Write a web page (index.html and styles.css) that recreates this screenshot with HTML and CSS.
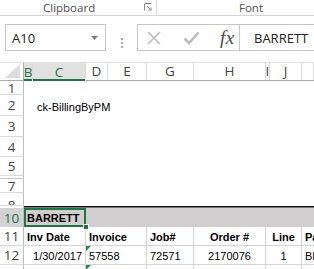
FILE: index.html
```html
<!DOCTYPE html>
<html>
<head>
<meta charset="utf-8">
<link rel="stylesheet" href="styles.css">
</head>
<body>
<div class="app">
  <div class="ribbon">
    <div class="group clip">
      <span class="glabel">Clipboard</span>
      <svg class="launcher" width="8" height="8" viewBox="0 0 8 8"><path d="M0.5 7.5V0.5H7.5" fill="none" stroke="#8a8a8a"/><path d="M3 3L7 7M7 4.5V7H4.5" fill="none" stroke="#8a8a8a"/></svg>
    </div>
    <div class="group fontgrp"><span class="glabel">Font</span></div>
  </div>

  <div class="fbar">
    <div class="namebox">
      <span class="nbtext">A10</span>
      <svg class="caret" width="7" height="4" viewBox="0 0 7 4"><path d="M0 0H7L3.5 4Z" fill="#7a7a7a"/></svg>
    </div>
    <div class="grip"><i></i><i></i><i></i></div>
    <div class="fbox">
      <div class="ficons">
        <svg class="ico" width="16" height="16" viewBox="0 0 16 16"><path d="M2 2L14 14M14 2L2 14" stroke="#bcbcbc" stroke-width="1.6" fill="none"/></svg>
        <svg class="ico" width="17" height="16" viewBox="0 0 17 16"><path d="M1.5 8.5L6 13L15.5 2.5" stroke="#bcbcbc" stroke-width="2.6" fill="none"/></svg>
        <span class="fx">fx</span>
      </div>
      <div class="fcontent">BARRETT</div>
    </div>
  </div>

  <div class="sheet">
    <div class="r colhdr">
      <div class="ch corner"><svg width="18" height="16" viewBox="0 0 18 16"><path d="M17 1V15H2Z" fill="#dcdcdc"/></svg></div>
      <div class="ch sel">B</div>
      <div class="ch sel">C</div>
      <div class="ch">D</div>
      <div class="ch">E</div>
      <div class="ch">G</div>
      <div class="ch">H</div>
      <div class="ch">I</div>
      <div class="ch">J</div>
      <div class="ch"></div>
    </div>

    <div class="r h14"><div class="rh">1</div><div class="body"></div></div>
    <div class="r h21"><div class="rh">2</div><div class="body title">ck-BillingByPM</div></div>
    <div class="r h21"><div class="rh">3</div><div class="body"></div></div>
    <div class="r h20"><div class="rh">4</div><div class="body"></div></div>
    <div class="r h19"><div class="rh">5</div><div class="body"></div></div>
    <div class="r h3"><div class="rh"></div><div class="body"></div></div>
    <div class="r h14"><div class="rh">7</div><div class="body"></div></div>
    <div class="r h13"><div class="rh clipped"><span>8</span></div><div class="body"></div></div>
    <div class="r split"><div class="rh"></div><div class="splitline"></div></div>

    <div class="r h19 band">
      <div class="rh rsel">10</div>
      <div class="c active">BARRETT<span class="handle"></span></div>
      <div class="c rest"></div>
    </div>
    <div class="r h19 data bold">
      <div class="rh">11</div>
      <div class="c bc">Inv Date</div>
      <div class="c de">Invoice</div>
      <div class="c g">Job#</div>
      <div class="c h ctr">Order #</div>
      <div class="c ij ctr">Line</div>
      <div class="c k">Pa</div>
    </div>
    <div class="r h19 data">
      <div class="rh">12</div>
      <div class="c bc right">1/30/2017</div>
      <div class="c de flag">57558</div>
      <div class="c g">72571</div>
      <div class="c h ctr">2170076</div>
      <div class="c ij ctr">1</div>
      <div class="c k">BL</div>
    </div>
    <div class="r h19 data">
      <div class="rh">13</div>
      <div class="c bc"></div>
      <div class="c de flag"></div>
      <div class="c g"></div>
      <div class="c h"></div>
      <div class="c ij"></div>
      <div class="c k"></div>
    </div>
  </div>
</div>
</body>
</html>
```

FILE: styles.css
```css
* { box-sizing: border-box; }
html, body { margin: 0; padding: 0; background: #fff; }
body { width: 314px; height: 269px; overflow: hidden; }
.app { width: 314px; height: 269px; overflow: hidden; font-family: "Segoe UI", "Open Sans", sans-serif; color: #444; }

/* ribbon */
.ribbon { display: flex; height: 16px; border-bottom: 1px solid #d5d5d5; }
.group { display: flex; align-items: center; height: 15px; }
.clip { width: 157px; padding-left: 43px; border-right: 1px solid #dadada; }
.glabel { font-size: 11.5px; color: #505050; line-height: 15px; }
.launcher { margin-left: 49px; margin-top: -2px; }
.fontgrp { padding-left: 82px; }

/* formula bar */
.fbar { display: flex; height: 46px; padding-top: 8px; padding-left: 5px; }
.namebox { width: 101px; height: 27px; border: 1px solid #c6c6c6; display: flex; align-items: center; justify-content: space-between; padding: 0 7px 0 6px; }
.nbtext { font-size: 13px; color: #222; }
.grip { width: 31px; display: flex; flex-direction: column; align-items: center; justify-content: center; gap: 2px; }
.grip i { display: block; width: 2px; height: 2px; background: #a8a8a8; }
.fbox { flex: 1; height: 27px; border: 1px solid #c6c6c6; border-right: none; display: flex; }
.ficons { width: 102px; border-right: 1px solid #c6c6c6; display: flex; align-items: center; padding-left: 8px; }
.ico { display: block; }
.ico + .ico { margin-left: 21px; }
.fx { font-family: "Liberation Serif", "DejaVu Serif", serif; font-style: italic; font-size: 19px; color: #4a4a4a; margin-left: 20px; letter-spacing: 0.5px; line-height: 20px; }
.fcontent { padding-left: 14px; display: flex; align-items: center; font-size: 13px; color: #222; white-space: nowrap; }

/* sheet */
.sheet { display: flex; flex-direction: column; }
.r { display: grid; grid-template-columns: 24px 9px 53px 22px 39px 47px 72px 4px 32px 1fr; }
.colhdr { height: 19px; border-top: 1px solid #e2e2e2; border-bottom: 1px solid #ababab; }
.ch { border-right: 1px solid #dcdcdc; font-size: 13.5px; color: #444; display: flex; align-items: center; justify-content: center; overflow: hidden; line-height: 17px; }
.ch.corner { align-items: flex-end; justify-content: flex-end; padding: 0 2px 1px 0; border-right-color: #ababab; }
.ch.sel { background: #e1e1e1; color: #217346; box-shadow: inset 0 -2px 0 #217346; margin-bottom: -1px; }

.rh { grid-column: 1; border-right: 1px solid #bdbdbd; border-bottom: 1px solid #dadada; font-size: 13.5px; line-height: 12px; color: #444; display: flex; align-items: center; justify-content: center; overflow: hidden; }
.body { grid-column: 2 / -1; }
.h14 { height: 14px; }
.h21 { height: 21px; }
.h20 { height: 20px; }
.h19 { height: 19px; }
.h13 { height: 13px; }
.h3 { height: 3px; }
.h3 .rh { border-bottom-color: #c8c8c8; }
.clipped { align-items: flex-end; }
.clipped span { line-height: 12px; height: 12px; display: block; margin-bottom: -6px; }
.split { height: 2px; }
.split .rh { border-bottom: none; }
.splitline { grid-column: 2 / -1; border-top: 1px solid #111; border-bottom: 1px solid #777; }

.title { font-family: "Liberation Sans", Arial, sans-serif; font-size: 11px; color: #000; padding-left: 13px; display: flex; align-items: flex-end; padding-bottom: 3px; }

.c { font-family: "Liberation Sans", Arial, sans-serif; font-size: 11px; color: #000; display: flex; align-items: center; padding: 1px 3px 0 3px; white-space: nowrap; overflow: hidden; position: relative; }
.band { background: #d0cece; }
.band .rh.rsel { background: #d3d3d3; color: #217346; border-bottom: none; }
.active { grid-column: 2 / 4; border: 2px solid #217346; font-weight: bold; padding-left: 1px; overflow: visible; }
.handle { position: absolute; right: -5px; bottom: -5px; width: 6px; height: 6px; background: #217346; border: 1px solid #fff; z-index: 2; }
.rest { grid-column: 4 / -1; }
.data .c { border-right: 1px solid #d4d4d4; border-bottom: 1px solid #d4d4d4; }
.bold .c { font-weight: bold; }
.bc { grid-column: 2 / 4; }
.de { grid-column: 4 / 6; }
.g { grid-column: 6 / 7; }
.h { grid-column: 7 / 8; }
.ij { grid-column: 8 / 10; }
.k { grid-column: 10 / 11; border-right: none !important; }
.ctr { justify-content: center; }
.right { justify-content: flex-end; }
.flag::before { content: ""; position: absolute; left: 0; top: 0; border-top: 5px solid #1e8e3e; border-right: 5px solid transparent; }
```
